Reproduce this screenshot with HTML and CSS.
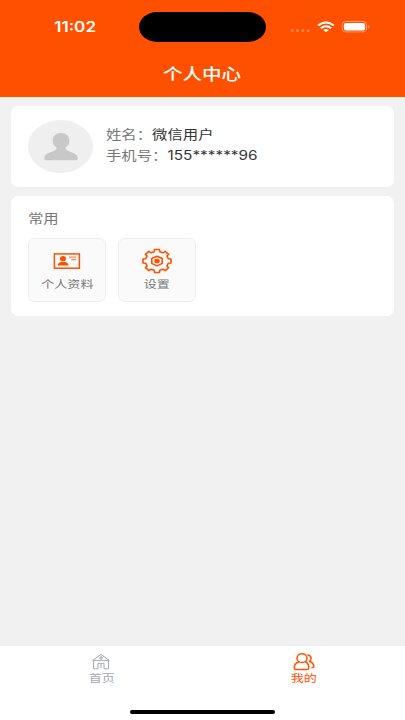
FILE: index.html
```
<!DOCTYPE html>
<html lang="zh-CN">
<head>
<meta charset="utf-8">
<title>个人中心</title>
<link rel="stylesheet" href="styles.css">
</head>
<body>
<div class="app">
  <header class="header">
    <div class="status">
      <div class="time"><span class="wide">11:02</span></div>
      <div class="island"></div>
      <div class="signals">
        <svg width="84" height="16" viewBox="0 0 84 16">
          <g fill="#fff" opacity=".3"><circle cx="2.3" cy="11.5" r="1.5"/><circle cx="7.5" cy="11.5" r="1.5"/><circle cx="12.8" cy="11.5" r="1.5"/><circle cx="18.1" cy="11.5" r="1.5"/></g>
          <g fill="none" stroke="#fff" stroke-width="2"><path d="M28.1 6.6Q36 .1 43.9 6.6M30.8 9.2Q36 5.2 41.2 9.2"/></g>
          <path d="M33.2 10.9Q36 9 38.8 10.9L36 13.2Z" fill="#fff"/>
          <rect x="52.2" y="2.5" width="24.4" height="10.4" rx="3.2" fill="none" stroke="#fff" opacity=".4"/>
          <rect x="53.9" y="4.1" width="21.2" height="7.3" rx="2" fill="#fff"/>
          <path d="M78 6.2Q79.6 6.6 79.6 7.7T78 9.2Z" fill="#fff" opacity=".5"/>
        </svg>
      </div>
    </div>
    <h1 class="title"><span class="wide">个人中心</span></h1>
  </header>
  <main class="content">
    <section class="card profile">
      <div class="avatar">
        <svg width="34" height="28" viewBox="0 0 34 28"><path fill="#c8c8c8" d="M17 0C22 0 25.4 3.3 25.4 7.7C25.4 10.8 23.5 13 21.6 14.4C21.1 16 21.8 16.8 23.4 17.4L30.5 20.6Q33.6 22 33.6 24.3V26Q33.6 27.2 32.2 27.2H1.8Q.4 27.2 .4 26V24.3Q.4 22 3.5 20.6L10.6 17.4C12.2 16.8 12.9 16 12.4 14.4C10.5 13 8.6 10.8 8.6 7.7C8.6 3.3 12 0 17 0Z"/></svg>
      </div>
      <div class="info">
        <div class="row"><span class="wide left">姓名：<b>微信用户</b></span></div>
        <div class="row"><span class="wide left">手机号：<b>155******96</b></span></div>
      </div>
    </section>
    <section class="card common">
      <h2 class="heading"><span class="wide left">常用</span></h2>
      <div class="tiles">
        <div class="tile">
          <svg width="28" height="26" viewBox="0 0 28 26"><rect x="1.4" y="5.9" width="25" height="14.3" fill="none" stroke="#ff5000" stroke-width="1.5"/><g fill="#ff5000"><ellipse cx="10" cy="10.7" rx="3" ry="2.6"/><path d="M4.6 17.5Q4.8 14.6 8 14H12.2Q15.4 14.6 15.6 17.5Z"/></g><path d="M16 9.1H23.3M18.4 11.6H23.3" stroke="#ff5000" stroke-width="1.3" opacity=".7"/></svg>
          <span class="wide">个人资料</span>
        </div>
        <div class="tile">
          <svg width="32" height="26" viewBox="0 0 32 26"><g fill="none" stroke="#ff5000" stroke-width="1.6" stroke-linejoin="round"><path d="M27.3 10.7L30 11V15L27.3 15.3L25.9 17.9L27.6 19.7L24.1 22.6L22 21.2L18.8 22.3L18.5 24.5H13.5L13.2 22.3L10 21.2L7.9 22.6L4.4 19.7L6.1 17.9L4.7 15.3L2 15V11L4.7 10.7L6.1 8.1L4.4 6.3L7.9 3.4L10 4.8L13.2 3.7L13.5 1.5H18.5L18.8 3.7L22 4.8L24.1 3.4L27.6 6.3L25.9 8.1Z"/><path d="M16 8.2L21.2 10.6V15.4L16 17.9L10.8 15.4V10.6Z"/></g><ellipse cx="16" cy="13" rx="2.8" ry="2.3" fill="#ff5000"/></svg>
          <span class="wide">设置</span>
        </div>
      </div>
    </section>
  </main>
  <footer class="footer">
    <nav class="tabs">
      <div class="tab">
        <svg width="22" height="18" viewBox="0 0 22 18"><g fill="none" stroke="#a5a8b6" stroke-width="1"><path d="M3.5 7V15.8H8V10.3H14V15.8H18.5V7M2.7 7.4L11 1.4L19.3 7.4M2.7 7.4H19.3M11 10.3V15M9 5H13M11 3V7"/></g></svg>
        <span class="wide">首页</span>
      </div>
      <div class="tab active">
        <svg width="22" height="18" viewBox="0 0 22 18"><g fill="none" stroke="#ff5000" stroke-width="1.5" stroke-linecap="round" stroke-linejoin="round"><ellipse cx="9" cy="5.2" rx="5" ry="4.4"/><path d="M5.8 8.8C2.8 10 1.2 12.2 1.2 15Q1.2 16.4 2.8 16.4H14.2Q15.8 16.4 15.8 15C15.8 12.2 15 10 12.2 8.8M15 2C18.8 2.8 19 6.6 16.4 8.3C19.2 9.3 20.8 11.6 20.8 13.8Q20.4 14.8 18.9 14.8"/></g></svg>
        <span class="wide">我的</span>
      </div>
    </nav>
    <div class="home-indicator"></div>
  </footer>
</div>
</body>
</html>
```
FILE: styles.css
```
* { box-sizing: border-box; }
body { margin: 0; font-family: Inter, "Noto Sans CJK SC", sans-serif; }
h1, h2 { margin: 0; font-weight: 400; }
b { font-weight: 400; color: #333; }
svg { display: block; flex: none; }
.app { width: 405px; height: 720px; display: flex; flex-direction: column; background: #f1f1f1; }
.wide { display: inline-block; white-space: nowrap; transform: scaleX(1.22); }
.left { transform-origin: left center; }
.header { height: 97px; background: #ff5000; color: #fff; }
.status { height: 53px; display: grid; grid-template-columns: 139px 127px 139px; align-items: center; }
.time { font-size: 14px; font-weight: 600; line-height: 16px; text-align: center; padding-left: 11px; }
.island { height: 30px; border-radius: 18px / 15px; background: #000; }
.signals { padding-left: 24px; }
.title { font-family: "Noto Sans CJK SC", sans-serif; font-size: 16px; font-weight: 500; line-height: 24px; text-align: center; padding-top: 8px; }
.content { flex: 1; padding: 9px 11px 0; display: flex; flex-direction: column; gap: 9px; }
.card { background: #fff; border-radius: 8px / 7px; }
.profile { height: 81px; display: flex; align-items: center; padding-left: 17px; }
.avatar { width: 65px; height: 53px; border-radius: 50%; background: #efefef; display: flex; align-items: center; justify-content: center; }
.info { padding-left: 13px; padding-bottom: 3px; font-size: 12.6px; color: #777; }
.row { height: 21px; line-height: 21px; }
.common { height: 120px; padding: 13px 17px 0; }
.heading { font-size: 12.6px; line-height: 20px; color: #777; }
.tiles { display: flex; gap: 12px; padding-top: 9px; }
.tile { width: 78px; height: 64px; border: 1px solid #eee; border-radius: 7px / 6px; background: #fafafa; display: flex; flex-direction: column; align-items: center; gap: 3px; font-size: 10.7px; line-height: 16px; color: #777; padding-top: 9px; }
.footer { height: 74px; background: #fff; display: flex; flex-direction: column; align-items: center; justify-content: space-between; padding: 7px 0 6px; }
.tabs { width: 100%; display: grid; grid-template-columns: 1fr 1fr; }
.tab { display: flex; flex-direction: column; align-items: center; font-size: 10.7px; line-height: 16px; color: #a5a8b6; }
.active { color: #ff5000; }
.home-indicator { width: 145px; height: 4px; border-radius: 2px; background: #000; }
```
